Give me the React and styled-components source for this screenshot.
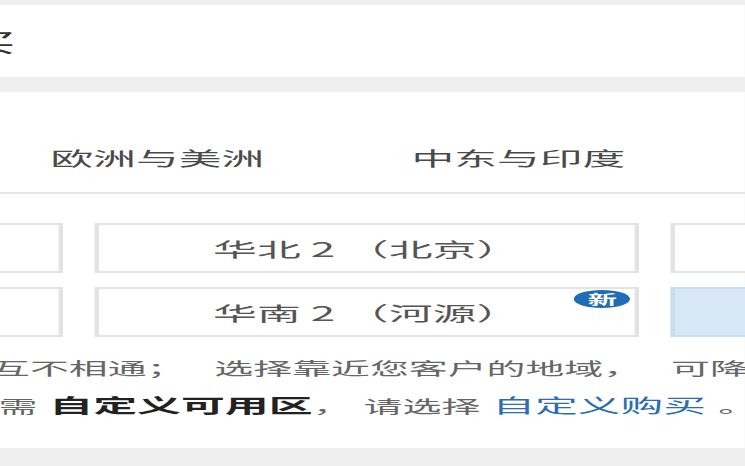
import styled, { createGlobalStyle } from 'styled-components';

// the screenshot is a horizontally stretched crop of a wider page
const SCALE = 2.25;
const SHIFT = 214;

const GlobalStyle = createGlobalStyle`
    html, body {
        margin: 0;
        padding: 0;
        background: #efefef;
    }
    body {
        font-family: "Noto Sans CJK SC", "Noto Sans", sans-serif;
        overflow: hidden;
    }
`;

const Viewport = styled.div`
    width: 745px;
    height: 466px;
    overflow: hidden;
    background: #efefef;
`;

const Stage = styled.div`
    width: ${745 / SCALE}px;
    padding-top: 5px;
    transform: scaleX(${SCALE});
    transform-origin: 0 0;
`;

const Card = styled.section`
    background: #fff;
    height: ${(props) => props.h}px;
    margin-bottom: ${(props) => props.gap || 0}px;
`;

const Inner = styled.div`
    margin-left: -${SHIFT}px;
    width: 820px;
`;

const TitleRow = styled.div`
    height: 72px;
    display: flex;
    align-items: center;
    padding-left: 96px;
    font-size: 25px;
    color: #333;
`;

const TabBar = styled.div`
    padding-top: 30px;
    border-bottom: 2px solid #e6e6e6;
`;

const TabList = styled.div`
    display: flex;
    margin-left: -117px;
`;

const Tab = styled.div`
    flex: 0 0 160.4px;
    height: 70px;
    display: flex;
    align-items: center;
    justify-content: center;
    font-size: 19px;
    color: #4a4a4a;
    white-space: nowrap;
`;

const RegionGrid = styled.div`
    margin-top: 29px;
    display: grid;
    grid-template-columns: repeat(3, 242px);
    grid-auto-rows: 50px;
    gap: 14px;
`;

const Region = styled.div`
    position: relative;
    box-sizing: border-box;
    display: flex;
    align-items: center;
    justify-content: center;
    border: 2px solid ${(props) => (props.selected ? '#cbdcee' : '#e3e3e3')};
    background: ${(props) => (props.selected ? '#d8e7f6' : '#fff')};
    font-size: 19.5px;
    color: #555;
    white-space: nowrap;
`;

const NewBadge = styled.span`
    position: absolute;
    top: 1px;
    right: 1.6px;
    width: 25.3px;
    height: 18px;
    border-radius: 50%;
    background: #1f6db5;
    color: #fff;
    font-size: 13px;
    font-weight: 700;
    line-height: 18px;
    text-align: center;
`;

const Notes = styled.div`
    margin-top: 12px;
`;

const NoteLine = styled.div`
    height: 37px;
    line-height: 37px;
    margin-left: ${(props) => props.indent}px;
    font-size: 17.3px;
    color: #666;
    white-space: nowrap;
    word-spacing: ${(props) => props.spacing || 0}px;
`;

const Strong = styled.b`
    font-size: 19.5px;
    font-weight: 700;
    color: #222;
`;

const Link = styled.a`
    font-size: 19px;
    color: #2c6db0;
    text-decoration: none;
`;

const tabs = ['中国', '亚太', '欧洲与美洲', '中东与印度'];

const regions = [
    { name: '华北 1 （青岛）' },
    { name: '华北 2 （北京）' },
    { name: '华北 3 （张家口）' },
    { name: '华南 1 （深圳）' },
    { name: '华南 2 （河源）', isNew: true },
    { name: '华南 3 （广州）', selected: true },
];

export default function App() {
    return (
        <>
            <GlobalStyle />
            <Viewport>
                <Stage>
                    <Card h={72} gap={15}>
                        <Inner>
                            <TitleRow>自定义购买</TitleRow>
                        </Inner>
                    </Card>
                    <Card h={356}>
                        <Inner>
                            <TabBar>
                                <TabList>
                                    {tabs.map((t) => (
                                        <Tab key={t}>{t}</Tab>
                                    ))}
                                </TabList>
                            </TabBar>
                            <RegionGrid>
                                {regions.map((r) => (
                                    <Region key={r.name} selected={r.selected}>
                                        {r.name}
                                        {r.isNew && <NewBadge>新</NewBadge>}
                                    </Region>
                                ))}
                            </RegionGrid>
                            <Notes>
                                <NoteLine indent={210} spacing={9}>
                                    互不相通； 选择靠近您客户的地域， 可降低网络时延、提高您客户的访问速度。
                                </NoteLine>
                                <NoteLine indent={196} spacing={1.5}>
                                    如需 <Strong>自定义可用区</Strong>， 请选择 <Link>自定义购买</Link> 。
                                </NoteLine>
                            </Notes>
                        </Inner>
                    </Card>
                </Stage>
            </Viewport>
        </>
    );
}
